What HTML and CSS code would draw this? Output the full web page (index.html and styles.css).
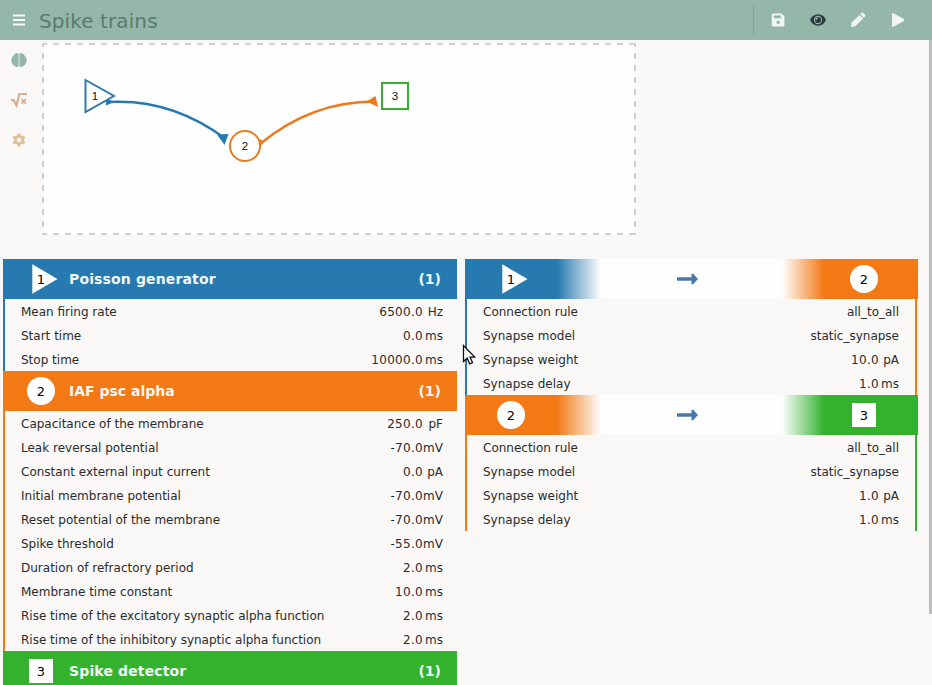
FILE: index.html
```html
<!DOCTYPE html>
<html lang="en">
<head>
<meta charset="utf-8">
<title>Spike trains</title>
<link rel="stylesheet" href="styles.css">
</head>
<body>
<header class="toolbar">
  <svg class="menu" width="12" height="12" viewBox="0 0 12 12"><path d="M0 1.500h12M0 6h12M0 10.500h12" stroke="#f8f8f6" stroke-width="2"/></svg>
  <h1 class="title">Spike trains</h1>
  <nav class="actions">
    <svg width="14" height="14" viewBox="0 0 14 14"><path fill="#f2f6f2" fill-rule="evenodd" d="M2.200.5h8.200L13.400 3.500V12a1.500 1.500 0 0 1-1.500 1.500H2.200A1.500 1.500 0 0 1 .7 12V2A1.500 1.500 0 0 1 2.200.5zM2.800 2.500v2.800h7V2.500zM7.200 7.400a1.800 1.800 0 1 0 0 3.600 1.800 1.800 0 0 0 0-3.600z"/></svg>
    <svg width="16" height="12" viewBox="0 0 16 12"><path fill="#2b373b" d="M8 .3C4.500.300 1.500 2.500 0 6c1.500 3.500 4.500 5.700 8 5.700s6.500-2.200 8-5.700C14.500 2.500 11.500.300 8 .3z"/><circle cx="8" cy="6" r="3.600" fill="none" stroke="#94b7a9" stroke-width="1.100"/><path d="M6 6.200a2 2 0 0 1 2-2" fill="none" stroke="#94b7a9" stroke-width="1.200"/></svg>
    <svg width="16" height="16" viewBox="0 0 16 16"><path fill="#f2f6f2" d="M1 15l.6-4.400 7.900-7.700 3.700 3.700-7.900 7.700zM10.300 2.100l1.100-1a1.400 1.400 0 0 1 2 0l1.500 1.500a1.400 1.400 0 0 1 0 2l-1 1.100z"/></svg>
    <svg width="14" height="16" viewBox="0 0 14 16"><path fill="#f2f6f2" d="M1 2Q1 .6 2.400 1.300L12.800 7Q14 8 12.800 9L2.400 14.700Q1 15.400 1 14z"/></svg>
  </nav>
</header>
<main class="page">
  <section class="workspace">
    <aside class="side">
      <svg width="16" height="16" viewBox="0 0 16 16"><path fill="#94b7a9" d="M7.600 1.800V14Q6.900 15.300 5.300 14.700 4 15 3.200 13.600 1.700 13.200 1.500 11.400 0 10.500.500 8.500-.2 6.900 1.300 5.500 1.300 3.900 2.800 3.200 3.200 1.500 5 1.400 6.700.400 7.600 1.800zM8.400 1.800V14Q9.100 15.300 10.700 14.700 12 15 12.800 13.600 14.300 13.200 14.500 11.400 16 10.500 15.500 8.500 16.200 6.900 14.700 5.500 14.700 3.900 13.200 3.200 12.800 1.500 11 1.400 9.300.400 8.400 1.800z"/></svg>
      <svg width="18" height="16" viewBox="0 0 18 16" fill="none" stroke="#d6b095" stroke-width="2.200"><path d="M1 8.200h2.700L6.500 13.600 9.300 2H17"/><path d="M11.500 7l4.500 4.600M16 7l-4.500 4.600" stroke-width="1.900"/></svg>
      <svg width="14" height="14" viewBox="0 0 14 14" fill="none" stroke="#e2c096"><circle cx="7" cy="7" r="3.700" stroke-width="2.800"/><g stroke-width="3"><path d="M7 .4v2.400M7 11.200v2.400M1.300 3.700l2.100 1.200M10.600 9.100l2.100 1.200M1.300 10.300l2.100-1.200M10.600 4.900l2.100-1.200"/></g></svg>
    </aside>
    <svg class="network" width="594" height="192" viewBox="42 43 594 192">
      <rect x="43" y="44" width="592" height="190" fill="#fefefe"/>
      <path d="M42 44H636" class="frame across"/><path d="M42 234H636" class="frame across"/><path d="M43 43V235" class="frame"/><path d="M635 43V235" class="frame"/>
      <g fill="none" stroke-width="2.500">
        <path d="M108 102Q171 98 226 139" stroke="#267aaf"/>
        <path d="M260 144Q312 101 376 101.500" stroke="#ec7a1c"/>
      </g>
      <path d="M106 98l8 4-8 3.500zM217 134.500l11.500-.5-4 11z" fill="#267aaf"/>
      <path d="M260 139l4 2.500-4 5zM366.500 101.500l9-5.500 2.500 11z" fill="#ec7a1c"/>
      <path d="M85.500 80L114 96 85.500 112z" fill="#fff" stroke="#2c7aac" stroke-width="2"/>
      <circle cx="245" cy="146" r="15" fill="#fff" stroke="#ec7a1c" stroke-width="2"/>
      <rect x="382" y="83" width="26" height="26" fill="#fff" stroke="#34b22e" stroke-width="2"/>
      <g class="node-label"><text x="95" y="100">1</text><text x="245" y="150">2</text><text x="395" y="100">3</text></g>
    </svg>
  </section>
  <section class="panels">
    <div class="panel">
      <article class="blue">
        <h2 class="head"><span class="badge"><svg width="28" height="28" viewBox="0 0 28 28"><path fill="#fff" d="M5.300-.7L30.500 14 5.300 28.700z"/></svg><b>1</b></span><span class="name">Poisson generator</span><span>(1)</span></h2>
        <dl>
          <div><dt>Mean firing rate</dt><dd>6500.0<i>Hz</i></dd></div>
          <div><dt>Start time</dt><dd>0.0<i>ms</i></dd></div>
          <div><dt>Stop time</dt><dd>10000.0<i>ms</i></dd></div>
        </dl>
      </article>
      <article class="orange">
        <h2 class="head"><span class="badge round"><b>2</b></span><span class="name plain">IAF psc alpha</span><span>(1)</span></h2>
        <dl>
          <div><dt>Capacitance of the membrane</dt><dd>250.0<i>pF</i></dd></div>
          <div><dt>Leak reversal potential</dt><dd>-70.0<i>mV</i></dd></div>
          <div><dt>Constant external input current</dt><dd>0.0<i>pA</i></dd></div>
          <div><dt>Initial membrane potential</dt><dd>-70.0<i>mV</i></dd></div>
          <div><dt>Reset potential of the membrane</dt><dd>-70.0<i>mV</i></dd></div>
          <div><dt>Spike threshold</dt><dd>-55.0<i>mV</i></dd></div>
          <div><dt>Duration of refractory period</dt><dd>2.0<i>ms</i></dd></div>
          <div><dt>Membrane time constant</dt><dd>10.0<i>ms</i></dd></div>
          <div><dt>Rise time of the excitatory synaptic alpha function</dt><dd>2.0<i>ms</i></dd></div>
          <div><dt>Rise time of the inhibitory synaptic alpha function</dt><dd>2.0<i>ms</i></dd></div>
        </dl>
      </article>
      <article class="green">
        <h2 class="head"><span class="badge square"><b>3</b></span><span class="name">Spike detector</span><span>(1)</span></h2>
      </article>
    </div>
    <div class="panel links">
      <article class="blue to-orange">
        <div class="head link"><span class="badge"><svg width="28" height="28" viewBox="0 0 28 28"><path fill="#fff" d="M5.300-.7L30.500 14 5.300 28.700z"/></svg><b>1</b></span><svg class="arrow" width="22" height="12" viewBox="0 0 22 12"><path fill="#4878aa" d="M0 4.200h14.500V.8h1.600L21 6l-4.900 5.200h-1.600V7.800H0z"/></svg><span class="badge round"><b>2</b></span></div>
        <dl>
          <div><dt>Connection rule</dt><dd class="word">all_to_all</dd></div>
          <div><dt>Synapse model</dt><dd class="word">static_synapse</dd></div>
          <div><dt>Synapse weight</dt><dd>10.0<i>pA</i></dd></div>
          <div><dt>Synapse delay</dt><dd>1.0<i>ms</i></dd></div>
        </dl>
      </article>
      <article class="orange to-green">
        <div class="head link"><span class="badge round"><b>2</b></span><svg class="arrow" width="22" height="12" viewBox="0 0 22 12"><path fill="#4878aa" d="M0 4.200h14.500V.8h1.600L21 6l-4.900 5.200h-1.600V7.800H0z"/></svg><span class="badge square"><b>3</b></span></div>
        <dl>
          <div><dt>Connection rule</dt><dd class="word">all_to_all</dd></div>
          <div><dt>Synapse model</dt><dd class="word">static_synapse</dd></div>
          <div><dt>Synapse weight</dt><dd>1.0<i>pA</i></dd></div>
          <div><dt>Synapse delay</dt><dd>1.0<i>ms</i></dd></div>
        </dl>
      </article>
    </div>
  </section>
  <div class="scroll-thumb"></div>
</main>
<svg class="cursor" width="14" height="22" viewBox="0 0 14 22"><path d="M1.500 1.500v16l3.700-3.300 2.500 5.600 2.800-1.200-2.500-5.500h4.700z" fill="#fff" stroke="#111" stroke-width="1.300"/></svg>
</body>
</html>
```

FILE: styles.css
```css
* { box-sizing: border-box; }
body {
  margin: 0;
  height: 685px;
  overflow: hidden;
  background: #f9f8f7;
  color: #2b2b2b;
  font: 12px "DejaVu Sans", sans-serif;
}
.toolbar {
  display: flex;
  align-items: center;
  height: 40px;
  padding-left: 13px;
  background: #94b7a9;
}
.title {
  flex: 1;
  margin: 2px 0 0 14px;
  color: #5c7a6e;
  font-size: 20px;
  font-weight: 400;
  letter-spacing: .1px;
}
.actions {
  display: grid;
  grid-template-columns: repeat(4, 40px);
  place-items: center;
  width: 179px;
  height: 32px;
  padding-left: 4px;
  border-left: 1px solid #7aa799;
}
.page { position: relative; height: 645px; }
.workspace { display: flex; padding-top: 3px; }
.side {
  display: grid;
  grid-template-rows: repeat(3, 40px);
  place-items: center;
  width: 38px;
  margin: -3px 4px 0 0;
}
.network { display: block; }
.frame { stroke: #d0d0d0; stroke-width: 2; stroke-dasharray: 6 6; stroke-dashoffset: 2; }
.across { stroke-dashoffset: 1; }
.node-label { font: 11.5px "Liberation Sans", sans-serif; text-anchor: middle; fill: #111; }
.panels {
  display: grid;
  grid-template-columns: 454px 453px;
  gap: 8px;
  align-items: start;
  margin: 24px 0 0 3px;
}
.blue { --from: #267aaf; }
.orange { --from: #f27914; }
.green { --from: #34b22e; }
.to-orange { --to: #f27914; }
.to-green { --to: #34b22e; }
.head {
  display: flex;
  align-items: center;
  height: 40px;
  margin: 0;
  padding: 0 16px 0 24px;
  background: var(--from);
  color: #f2f6f6;
  font-size: 14px;
  font-weight: 700;
}
.name { flex: 1; margin-left: 14px; letter-spacing: .14px; }
.plain { letter-spacing: 0; }
.badge {
  display: grid;
  place-items: center;
  width: 28px;
  height: 28px;
  color: #000;
}
.badge > * { grid-area: 1 / 1; overflow: visible; }
.badge b { font-size: 13px; font-weight: 400; }
.round { border-radius: 50%; background: #fff; }
.square { width: 24px; height: 24px; margin: 0 2px; background: #fff; }
.link {
  justify-content: space-between;
  padding: 0 40px 0 32px;
  background: linear-gradient(90deg, var(--from) 92px, #fefefe 136px, #fefefe 317px, var(--to) 359px);
}
dl { margin: 0; padding: 0 14px 0 16px; border-left: 2px solid var(--from); }
.links dl { margin-right: 1px; padding-right: 16px; border-right: 2px solid var(--to); }
dl div { display: flex; justify-content: space-between; height: 24px; line-height: 26px; }
dd { margin: 0; letter-spacing: .3px; }
.word { letter-spacing: 0; }
i { display: inline-block; width: 20px; font-style: normal; text-align: right; letter-spacing: 0; }
.scroll-thumb {
  position: absolute;
  top: 0;
  right: 0;
  width: 3px;
  height: 574px;
  background: #bdbdbb;
}
.cursor { position: absolute; left: 462px; top: 344px; }
```
